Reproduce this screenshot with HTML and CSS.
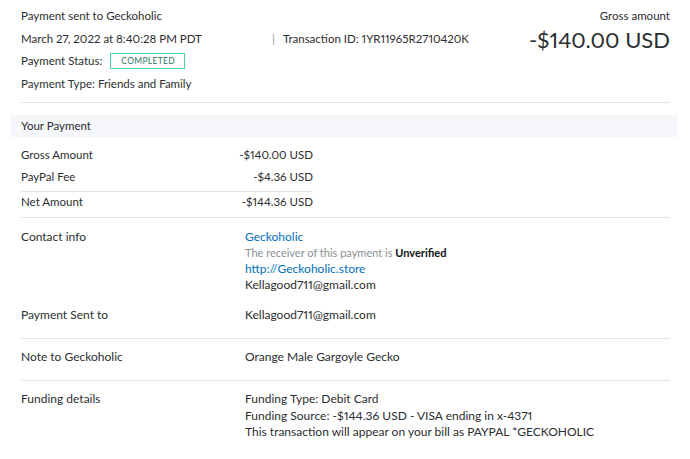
FILE: index.html
```html
<!DOCTYPE html>
<html>
<head>
<meta charset="utf-8">
<link rel="stylesheet" href="styles.css">
</head>
<body>
<div class="page">
  <header class="head">
    <div class="head-left">
      <div class="hline">Payment sent to Geckoholic</div>
      <div class="hline dateline">
        <span class="date">March 27, 2022 at 8:40:28 PM PDT</span>
        <span class="sep">|</span>
        <span class="txn">Transaction ID: 1YR11965R2710420K</span>
      </div>
      <div class="hline">Payment Status: <span class="badge">COMPLETED</span></div>
      <div class="hline">Payment Type: Friends and Family</div>
    </div>
    <div class="head-right">
      <div class="gross-label">Gross amount</div>
      <div class="gross-value">-$140.00 USD</div>
    </div>
  </header>

  <div class="band">Your Payment</div>

  <section class="amounts">
    <div class="amt-top">
      <div class="amt-row"><span>Gross Amount</span><span>-$140.00 USD</span></div>
      <div class="amt-row"><span>PayPal Fee</span><span>-$4.36 USD</span></div>
    </div>
    <div class="amt-row net"><span>Net Amount</span><span>-$144.36 USD</span></div>
  </section>

  <section class="detail first">
    <div class="label">Contact info</div>
    <div class="value">
      <div class="link">Geckoholic</div>
      <div class="muted">The receiver of this payment is <b class="strong">Unverified</b></div>
      <div class="link">http://Geckoholic.store</div>
      <div>Kellagood711@gmail.com</div>
    </div>
  </section>

  <section class="detail sent">
    <div class="label">Payment Sent to</div>
    <div class="value"><div>Kellagood711@gmail.com</div></div>
  </section>

  <section class="detail">
    <div class="label">Note to Geckoholic</div>
    <div class="value"><div>Orange Male Gargoyle Gecko</div></div>
  </section>

  <section class="detail last">
    <div class="label">Funding details</div>
    <div class="value funding">
      <div>Funding Type: Debit Card</div>
      <div>Funding Source: -$144.36 USD - VISA ending in x-4371</div>
      <div>This transaction will appear on your bill as PAYPAL *GECKOHOLIC</div>
    </div>
  </section>
</div>
</body>
</html>
```
FILE: styles.css
```css
html, body {
  margin: 0;
  padding: 0;
  background: #ffffff;
}
body {
  font-family: Lato, "Open Sans", sans-serif;
  font-size: 12px;
  font-variant-numeric: proportional-nums;
  color: #2c2e2f;
}
.page {
  padding: 0 20px 0 21px;
}
.head {
  display: flex;
  justify-content: space-between;
  padding-top: 5px;
  padding-bottom: 7px;
  border-bottom: 1px solid #e3e3e3;
}
.head-left {
  font-size: 11.5px;
}
.hline {
  height: 22.5px;
  line-height: 22.5px;
  display: flex;
  align-items: center;
}
.date {
  width: 251px;
}
.sep {
  color: #9a9a9a;
  margin-right: 8px;
}
.badge {
  display: inline-block;
  margin-left: 8px;
  border: 1px solid #48d2a8;
  color: #2b7766;
  font-size: 8.5px;
  letter-spacing: 0.3px;
  line-height: 14px;
  padding: 0 9px 0 10px;
}
.head-right {
  text-align: right;
}
.gross-label {
  line-height: 22.5px;
  font-size: 11.5px;
}
.gross-value {
  font-size: 22px;
  line-height: 24px;
  color: #2c2e2f;
}
.band {
  margin: 12px -8px 0 -11px;
  padding-left: 11px;
  background: #f5f7fa;
  height: 22px;
  line-height: 22px;
  font-size: 11.5px;
}
.amounts {
  padding-top: 7px;
  border-bottom: 1px solid #e3e3e3;
  font-size: 11.5px;
}
.amt-top {
  width: 292px;
  padding-bottom: 3px;
  border-bottom: 1px solid #e3e3e3;
}
.amt-row {
  width: 292px;
  display: flex;
  justify-content: space-between;
  line-height: 22px;
}
.amt-row.net {
  line-height: 20px;
  padding-bottom: 5px;
}
.detail {
  display: grid;
  grid-template-columns: 224px 1fr;
  padding: 10px 0 15px;
  border-bottom: 1px solid #e3e3e3;
  line-height: 16px;
}
.detail.first {
  padding: 11px 0 0;
  border-bottom: none;
}
.detail.sent {
  padding-top: 14px;
}
.detail.last {
  border-bottom: none;
}
.funding div {
  line-height: 16.5px;
}
.link {
  color: #0070ba;
}
.muted {
  color: #8a8f93;
  font-size: 11px;
}
.strong {
  color: #111;
  font-weight: 700;
}
```
